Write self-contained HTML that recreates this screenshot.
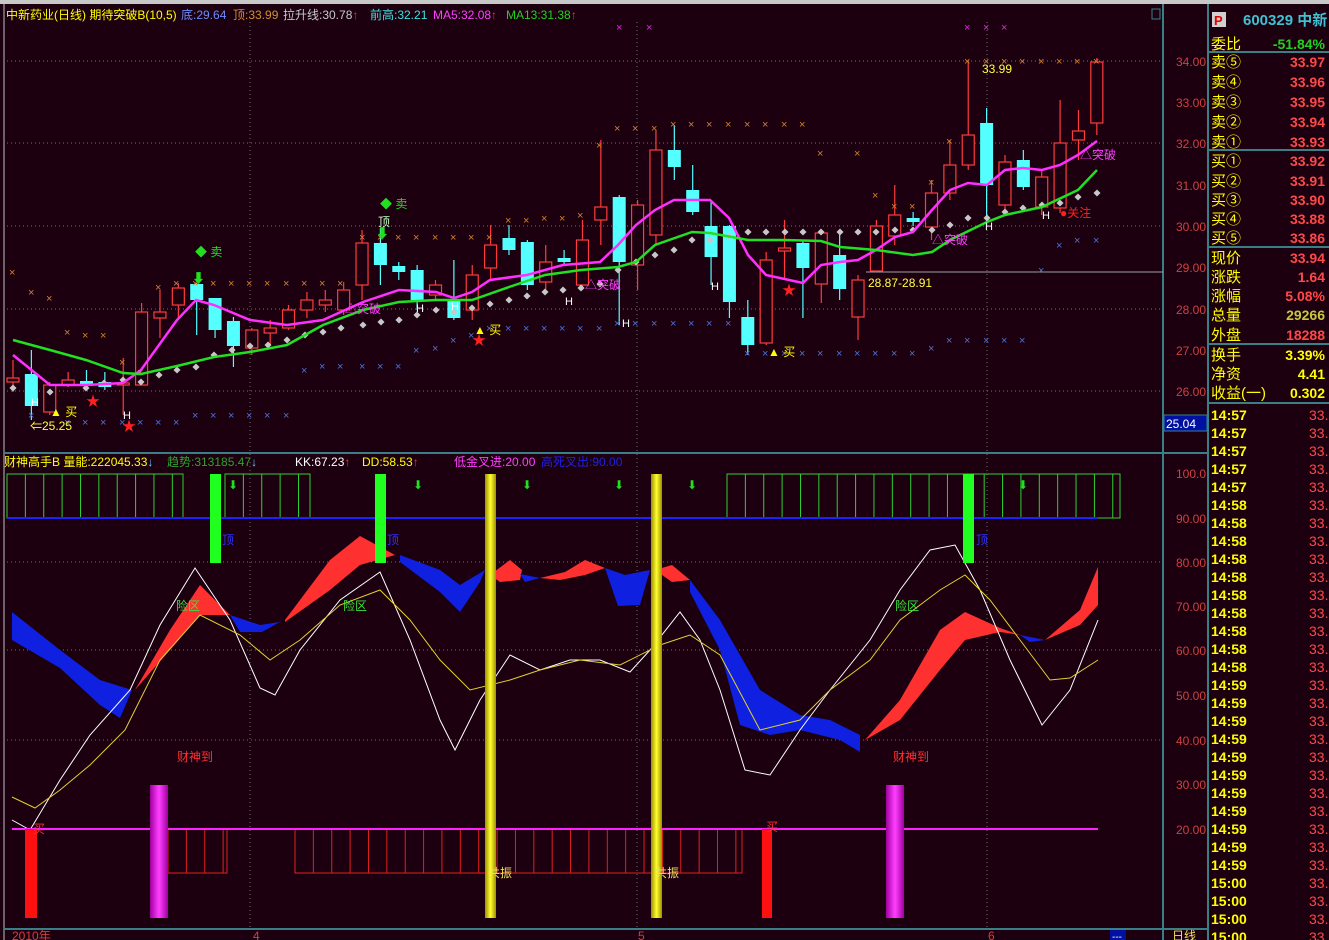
<!DOCTYPE html>
<html><head><meta charset="utf-8"><style>
body{margin:0;background:#1c0010;width:1329px;height:940px;overflow:hidden;font-family:"Liberation Sans","Noto Sans CJK SC",sans-serif}
svg{position:absolute;left:0;top:0}
.t{font-family:"Liberation Sans","Noto Sans CJK SC",sans-serif}
</style></head><body>
<svg id="s" width="1329" height="940" xmlns="http://www.w3.org/2000/svg">
<rect width="1329" height="940" fill="#1c0010"/>
<rect width="1329" height="4" fill="#c8c8c8"/>
<g id="grid" stroke="#707070" stroke-dasharray="1,3" stroke-width="1">
<line x1="7" y1="61" x2="1163" y2="61"/><line x1="7" y1="143" x2="1163" y2="143"/><line x1="7" y1="226" x2="1163" y2="226"/><line x1="7" y1="309" x2="1163" y2="309"/><line x1="7" y1="391" x2="1163" y2="391"/>
<line x1="7" y1="562" x2="1163" y2="562"/><line x1="7" y1="650" x2="1163" y2="650"/><line x1="7" y1="740" x2="1163" y2="740"/>
<line x1="250" y1="22" x2="250" y2="929"/><line x1="637" y1="22" x2="637" y2="929"/><line x1="987" y1="22" x2="987" y2="929"/>
</g>
<g stroke="#3a7f86" stroke-width="2" fill="none">
<line x1="4" y1="4" x2="4" y2="940" stroke="#c0c0c0" stroke-width="1"/>
<line x1="1163" y1="4" x2="1163" y2="940"/>
<line x1="1208" y1="4" x2="1208" y2="940"/>
<line x1="4" y1="453" x2="1208" y2="453"/>
<line x1="4" y1="929" x2="1208" y2="929"/>
<line x1="1208" y1="52" x2="1329" y2="52"/><line x1="1208" y1="150" x2="1329" y2="150"/><line x1="1208" y1="247" x2="1329" y2="247"/><line x1="1208" y1="344" x2="1329" y2="344"/><line x1="1208" y1="403" x2="1329" y2="403"/>
</g>
<rect x="1152" y="9" width="8" height="10" fill="none" stroke="#3a7f86"/>
<line x1="866" y1="272" x2="1163" y2="272" stroke="#a0a0a0"/>
<g id="cand"></g>
<g id="mk"></g>
<polyline fill="none" stroke="#ff30ff" stroke-width="2.5" points="13,355 50,385 86,385 123,383 141,370 159,345 177,320 196,300 214,305 250,320 287,325 323,320 363,302 399,290 436,292 454,298 472,292 490,280 527,275 563,265 600,262 618,245 636,225 655,210 674,200 710,200 729,218 748,255 766,275 803,283 821,265 840,262 858,260 876,250 895,237 913,232 932,210 950,190 968,183 987,185 1005,170 1023,168 1042,170 1060,165 1078,155 1097,141"/>
<polyline fill="none" stroke="#20e020" stroke-width="2.5" points="13,340 50,350 86,360 123,373 141,374 177,366 214,357 250,352 287,345 323,325 363,310 399,302 436,300 472,300 509,287 545,275 581,270 618,267 636,262 655,245 692,232 710,233 748,240 785,240 821,241 840,247 876,250 913,255 932,252 950,240 987,222 1005,215 1042,207 1078,190 1097,170"/>
<g id="low"></g>
<g fill="#ff3030">
<polygon points="135,690 170,630 200,585 230,615 200,615 170,650"/>
<polygon points="285,620 330,560 360,536 395,555 360,565 330,590 285,622"/>
<polygon points="490,575 510,560 522,570 520,580 500,582"/>
<polygon points="540,578 565,572 585,560 605,568 585,575 560,580"/>
<polygon points="655,570 672,565 690,580 672,582"/>
<polygon points="865,740 900,700 940,630 965,612 1000,628 1020,635 1000,632 965,640 940,670 900,720"/>
<polygon points="1045,640 1080,610 1098,567 1098,605 1080,625"/>
</g>
<g fill="#1020e0">
<polygon points="12,612 60,650 100,680 132,690 120,718 100,705 60,668 12,640"/>
<polygon points="230,615 260,625 280,622 262,632 240,632"/>
<polygon points="400,555 440,570 460,585 485,570 480,582 460,612 440,592 400,562"/>
<polygon points="520,574 540,578 525,582"/>
<polygon points="605,568 625,575 650,570 640,605 618,606"/>
<polygon points="690,580 720,620 760,690 800,715 830,720 860,735 860,752 840,740 800,730 770,735 740,725 720,650 690,592"/>
<polygon points="1020,635 1045,640 1030,642"/>
</g>
<polyline fill="none" stroke="#ffffff" stroke-width="1" points="12,820 30,830 60,780 90,735 130,690 160,625 195,568 230,620 260,688 275,695 300,650 340,600 380,572 410,640 440,720 455,750 480,700 510,655 540,670 570,660 600,660 630,672 650,650 680,612 700,640 720,690 745,770 770,775 800,730 830,690 870,640 900,590 930,550 955,545 980,590 1010,660 1042,725 1070,690 1098,620"/>
<polyline fill="none" stroke="#e0d030" stroke-width="1" points="12,797 35,808 60,790 90,765 125,730 160,660 200,615 240,635 270,660 300,640 340,605 380,590 410,620 440,660 470,690 510,680 540,670 580,660 620,665 660,645 690,635 720,655 760,730 800,720 830,690 870,660 900,620 940,590 965,575 990,600 1020,640 1050,680 1070,678 1098,660"/>
<line x1="12" y1="829" x2="1098" y2="829" stroke="#ff20ff" stroke-width="2"/>
<line x1="7" y1="518" x2="1098" y2="518" stroke="#2020ff" stroke-width="2"/>
<defs>
<linearGradient id="yg" x1="0" x2="1"><stop offset="0" stop-color="#a09000"/><stop offset=".5" stop-color="#ffff30"/><stop offset="1" stop-color="#a09000"/></linearGradient>
<linearGradient id="mg" x1="0" x2="1"><stop offset="0" stop-color="#a000a0"/><stop offset=".5" stop-color="#ff40ff"/><stop offset="1" stop-color="#a000a0"/></linearGradient>
</defs>
<rect x="485" y="474" width="11" height="444" fill="url(#yg)"/>
<rect x="651" y="474" width="11" height="444" fill="url(#yg)"/>
<rect x="150" y="785" width="18" height="133" fill="url(#mg)"/>
<rect x="886" y="785" width="18" height="133" fill="url(#mg)"/>
<rect x="25" y="829" width="12" height="89" fill="#ff1010"/>
<rect x="762" y="829" width="10" height="89" fill="#ff1010"/>
<rect x="210" y="474" width="11" height="89" fill="#20ff20"/>
<rect x="375" y="474" width="11" height="89" fill="#20ff20"/>
<rect x="963" y="474" width="11" height="89" fill="#20ff20"/>
<g class="t" font-size="12">
<text x="177" y="761" fill="#ff3030">财神到</text><text x="893" y="761" fill="#ff3030">财神到</text>
<text x="176" y="610" fill="#40e040">险区</text><text x="343" y="610" fill="#40e040">险区</text><text x="895" y="610" fill="#40e040">险区</text>
<text x="222" y="544" fill="#3030ff">顶</text><text x="387" y="544" fill="#3030ff">顶</text><text x="976" y="544" fill="#3030ff">顶</text>
<text x="488" y="877" fill="#f0e060">共振</text><text x="655" y="877" fill="#f0e060">共振</text>
<text x="766" y="831" fill="#ff3030">买</text><text x="33" y="833" fill="#ff3030">买</text>
</g>
<g class="t" font-size="12">
<text x="195" y="256" fill="#20e020">◆ 卖</text><text x="380" y="208" fill="#20e020">◆ 卖</text>
<text x="378" y="226" fill="#c0ffc0">顶</text>
<text x="50" y="416" fill="#ffff00">▲ 买</text><text x="474" y="334" fill="#ffff00">▲ 买</text><text x="768" y="356" fill="#ffff00">▲ 买</text>
<text x="30" y="430" fill="#ffff40">⇐25.25</text>
<text x="868" y="287" fill="#ffff40">28.87-28.91</text>
<text x="982" y="73" fill="#ffff40">33.99</text>
<text x="345" y="313" fill="#ff40ff">△突破</text><text x="585" y="289" fill="#ff40ff">△突破</text><text x="932" y="244" fill="#ff40ff">△突破</text><text x="1080" y="159" fill="#ff40ff">△突破</text>
<text x="1060" y="217" fill="#ff2020">●关注</text>
<g fill="#ff2020" font-size="14"><text x="86" y="406">★</text><text x="122" y="431">★</text><text x="472" y="345">★</text><text x="782" y="295">★</text></g>
<g fill="#ffffff" font-size="11"><text x="31" y="406">H</text><text x="123" y="419">H</text><text x="416" y="312">H</text><text x="565" y="305">H</text><text x="622" y="327">H</text><text x="711" y="290">H</text><text x="985" y="230">H</text><text x="1042" y="219">H</text><text x="451" y="310">H</text></g>
<g fill="#20e020" font-size="13"><text x="192" y="283">⬇</text><text x="376" y="238">⬇</text></g>
</g>
<g class="t" font-size="12">
<text x="6" y="19" fill="#ffff00">中新药业(日线) 期待突破B(10,5)</text>
<text x="181" y="19" fill="#6a8cff">底:29.64</text>
<text x="233" y="19" fill="#d09030">顶:33.99</text>
<text x="283" y="19" fill="#c8c8c8">拉升线:30.78<tspan fill="#ff3030">↑</tspan></text>
<text x="370" y="19" fill="#40e0e0">前高:32.21</text>
<text x="433" y="19" fill="#ff40ff">MA5:32.08<tspan fill="#ff3030">↑</tspan></text>
<text x="506" y="19" fill="#20d020">MA13:31.38<tspan fill="#ff3030">↑</tspan></text>
<text x="4" y="466" fill="#ffff00">财神高手B 量能:222045.33<tspan fill="#60d0ff">↓</tspan></text>
<text x="167" y="466" fill="#30a030">趋势:313185.47<tspan fill="#60d0ff">↓</tspan></text>
<text x="295" y="466" fill="#ffffff">KK:67.23<tspan fill="#ff3030">↑</tspan></text>
<text x="362" y="466" fill="#ffff00">DD:58.53<tspan fill="#ff3030">↑</tspan></text>
<text x="454" y="466" fill="#ff40ff">低金叉进:20.00</text>
<text x="541" y="466" fill="#2020e0">高死叉出:90.00</text>
</g>
<g class="t" font-size="12" fill="#d04040" text-anchor="end">
<text x="1206" y="66">34.00</text><text x="1206" y="107">33.00</text><text x="1206" y="148">32.00</text><text x="1206" y="190">31.00</text><text x="1206" y="231">30.00</text><text x="1206" y="272">29.00</text><text x="1206" y="314">28.00</text><text x="1206" y="355">27.00</text><text x="1206" y="396">26.00</text>
<text x="1206" y="478">100.0</text><text x="1206" y="523">90.00</text><text x="1206" y="567">80.00</text><text x="1206" y="611">70.00</text><text x="1206" y="655">60.00</text><text x="1206" y="700">50.00</text><text x="1206" y="745">40.00</text><text x="1206" y="789">30.00</text><text x="1206" y="834">20.00</text>
</g>
<rect x="1164" y="415" width="43" height="16" fill="#0010a0" stroke="#3a7f86"/>
<text x="1166" y="428" class="t" font-size="12" fill="#ffffff">25.04</text>
<g class="t" font-size="12" fill="#d04040"><text x="12" y="940">2010年</text><text x="253" y="940">4</text><text x="638" y="940">5</text><text x="988" y="940">6</text></g>
<rect x="1110" y="930" width="16" height="10" fill="#0010a0"/><text x="1112" y="940" class="t" font-size="10" fill="#fff">---</text>
<text x="1172" y="940" class="t" font-size="12" fill="#f0e060">日线</text>
<rect x="1212" y="12" width="14" height="15" fill="#d0d0d0"/><text x="1214" y="25" class="t" font-size="13" font-weight="bold" fill="#e00000">P</text>
<text x="1243" y="25" class="t" font-size="15" font-weight="bold" fill="#40c0d0">600329 中新</text>
<g id="rp" class="t" font-size="15"></g>
</svg>
<script>
var NS="http://www.w3.org/2000/svg";
function el(p,t,a,txt){var e=document.createElementNS(NS,t);for(var k in a)e.setAttribute(k,a[k]);if(txt)e.textContent=txt;document.getElementById(p).appendChild(e);return e;}
var C=[[378,382,360,392,1],[374,406,350,420,0],[385,412,382,415,1],[380,385,372,387,1],[381,384,370,390,0],[382,387,372,390,0],[383,385,358,415,1],[312,385,303,385,1],[312,318,290,338,1],[288,305,283,318,1],[284,300,283,335,0],[298,330,298,338,0],[321,346,317,367,0],[330,348,328,355,1],[328,333,320,345,1],[310,328,305,330,1],[300,310,292,318,1],[300,305,290,312,1],[290,310,282,315,1],[243,285,230,300,1],[243,265,228,285,0],[266,272,262,280,0],[270,300,265,310,0],[285,295,280,300,1],[300,318,260,320,0],[275,310,265,320,1],[245,268,225,280,1],[238,250,225,255,0],[242,285,240,290,0],[262,282,245,290,1],[258,262,250,265,0],[240,285,220,290,1],[207,220,140,245,1],[197,262,195,325,0],[205,265,200,290,1],[150,235,130,245,1],[150,167,125,180,0],[190,212,165,215,0],[226,257,200,285,0],[226,302,225,318,0],[317,345,300,355,0],[260,343,252,345,1],[248,251,220,280,1],[243,268,240,318,0],[233,284,230,303,1],[255,289,230,300,0],[280,317,275,340,1],[226,271,220,272,1],[215,236,185,245,1],[218,222,212,226,0],[193,227,180,240,1],[165,193,140,200,1],[135,165,60,170,1],[123,185,108,225,0],[162,205,155,215,1],[160,187,150,190,0],[177,207,170,215,1],[143,208,100,213,1],[131,140,110,160,1],[62,123,58,135,1]];
for(var i=0;i<C.length;i++){var c=C[i],x=13+18.37*i;var col=c[4]?"#ff3c3c":"#54ffff";
el("cand","line",{x1:x,y1:c[2],x2:x,y2:c[3],stroke:col,"stroke-width":1.2});
var h=Math.max(c[1]-c[0],2);
if(c[4])el("cand","rect",{x:x-6,y:c[0],width:12,height:h,fill:"#1c0010",stroke:col,"stroke-width":1.2});
else el("cand","rect",{x:x-6.5,y:c[0],width:13,height:h,fill:col});}
var D=[[13,388],[50,392],[86,388],[104,383],[123,380],[141,382],[159,375],[177,370],[196,367],[214,355],[232,350],[250,346],[268,345],[287,340],[305,335],[323,332],[341,328],[363,325],[381,322],[399,320],[417,315],[436,310],[454,312],[472,308],[490,304],[509,300],[527,296],[545,292],[563,290],[581,288],[600,284],[618,270],[636,262],[655,255],[674,250],[692,240],[710,240],[729,236],[748,232],[766,232],[785,232],[803,232],[821,232],[840,232],[858,232],[876,232],[895,230],[913,230],[932,230],[950,225],[968,218],[987,218],[1005,212],[1023,208],[1042,205],[1060,203],[1078,197],[1097,193]];
D.forEach(function(d){el("mk","rect",{x:d[0]-2.5,y:d[1]-2.5,width:5,height:5,fill:"#c8c8c8",transform:"rotate(45 "+d[0]+" "+d[1]+")"});});
function X(x,y,c){el("mk","text",{x:x-4,y:y+4,fill:c,"font-size":11,"font-family":"Liberation Sans"},"×");}
var OR="#d08030",BL="#5070d0",MG="#d030d0";
[[13,272],[32,292],[50,298],[68,332],[86,335],[104,335],[123,362],[141,372],[159,287],[177,283],[196,283],[214,283],[232,283],[250,283],[268,283],[287,283],[305,283],[323,283],[341,283],[363,237],[381,237],[399,237],[417,237],[436,237],[454,237],[472,237],[490,237],[509,220],[527,220],[545,218],[563,218],[581,215],[600,145],[618,128],[636,128],[655,128],[674,124],[692,124],[710,124],[729,124],[748,124],[766,124],[785,124],[803,124],[821,153],[858,153],[876,195],[895,206],[913,206],[932,182],[950,141],[968,61],[987,61],[1005,61],[1023,61],[1042,61],[1060,61],[1078,61],[1097,61]].forEach(function(p){X(p[0],p[1],OR);});
[[32,415],[68,422],[86,422],[104,422],[123,422],[141,422],[159,422],[177,422],[196,415],[214,415],[232,415],[250,415],[268,415],[287,415],[305,370],[323,366],[341,366],[363,366],[381,366],[399,366],[417,350],[436,348],[454,340],[472,335],[490,328],[509,328],[527,328],[545,328],[563,328],[581,328],[600,328],[618,323],[636,323],[655,323],[674,323],[692,323],[710,323],[729,323],[748,353],[766,353],[785,353],[803,353],[821,353],[840,353],[858,353],[876,353],[895,353],[913,353],[932,348],[950,340],[968,340],[987,340],[1005,340],[1023,340],[1042,270],[1060,245],[1078,240],[1097,240]].forEach(function(p){X(p[0],p[1],BL);});
[[620,27],[650,27],[968,27],[987,27],[1005,27]].forEach(function(p){X(p[0],p[1],MG);});
function boxes(x0,x1,y0,y1,col){el("low","rect",{x:x0,y:y0,width:x1-x0,height:y1-y0,fill:"none",stroke:col,"stroke-width":1});for(var x=x0+18.37;x<x1-2;x+=18.37)el("low","line",{x1:x,y1:y0,x2:x,y2:y1,stroke:col,"stroke-width":1});}
boxes(7,183,474,518,"#30d030");boxes(225,310,474,518,"#30d030");boxes(727,1120,474,518,"#30d030");
boxes(168,227,829,873,"#e02020");boxes(295,742,829,873,"#e02020");
[233,418,527,619,692,1023].forEach(function(x){el("low","text",{x:x-5,y:489,fill:"#20e020","font-size":12,"font-family":"DejaVu Sans"},"⬇");});
var rows=[["委比","-51.84%",43,"#20d020"],["卖⑤","33.97",61],["卖④","33.96",81],["卖③","33.95",101],["卖②","33.94",121],["卖①","33.93",141],["买①","33.92",160],["买②","33.91",180],["买③","33.90",199],["买④","33.88",218],["买⑤","33.86",237],["现价","33.94",257],["涨跌","1.64",276],["涨幅","5.08%",295],["总量","29266",314,"#c8c840"],["外盘","18288",334],["换手","3.39%",354,"#ffff00"],["净资","4.41",373,"#ffff00"],["收益(一)","0.302",392,"#ffff00"]];
rows.forEach(function(r){el("rp","text",{x:1211,y:r[2]+6,fill:"#ffff00"},r[0]);el("rp","text",{x:1325,y:r[2]+6,fill:r[3]||"#ff4848","text-anchor":"end","font-weight":"bold","font-size":14},r[1]);});
var times=[];for(var i=0;i<5;i++)times.push("14:57");for(i=0;i<10;i++)times.push("14:58");for(i=0;i<11;i++)times.push("14:59");for(i=0;i<4;i++)times.push("15:00");
times.forEach(function(t,i){var y=414+18*i+6;el("rp","text",{x:1211,y:y,fill:"#ffff00","font-weight":"bold","font-size":14},t);el("rp","text",{x:1309,y:y,fill:"#ff4848","font-size":14},"33.");});
</script>
</body></html>
